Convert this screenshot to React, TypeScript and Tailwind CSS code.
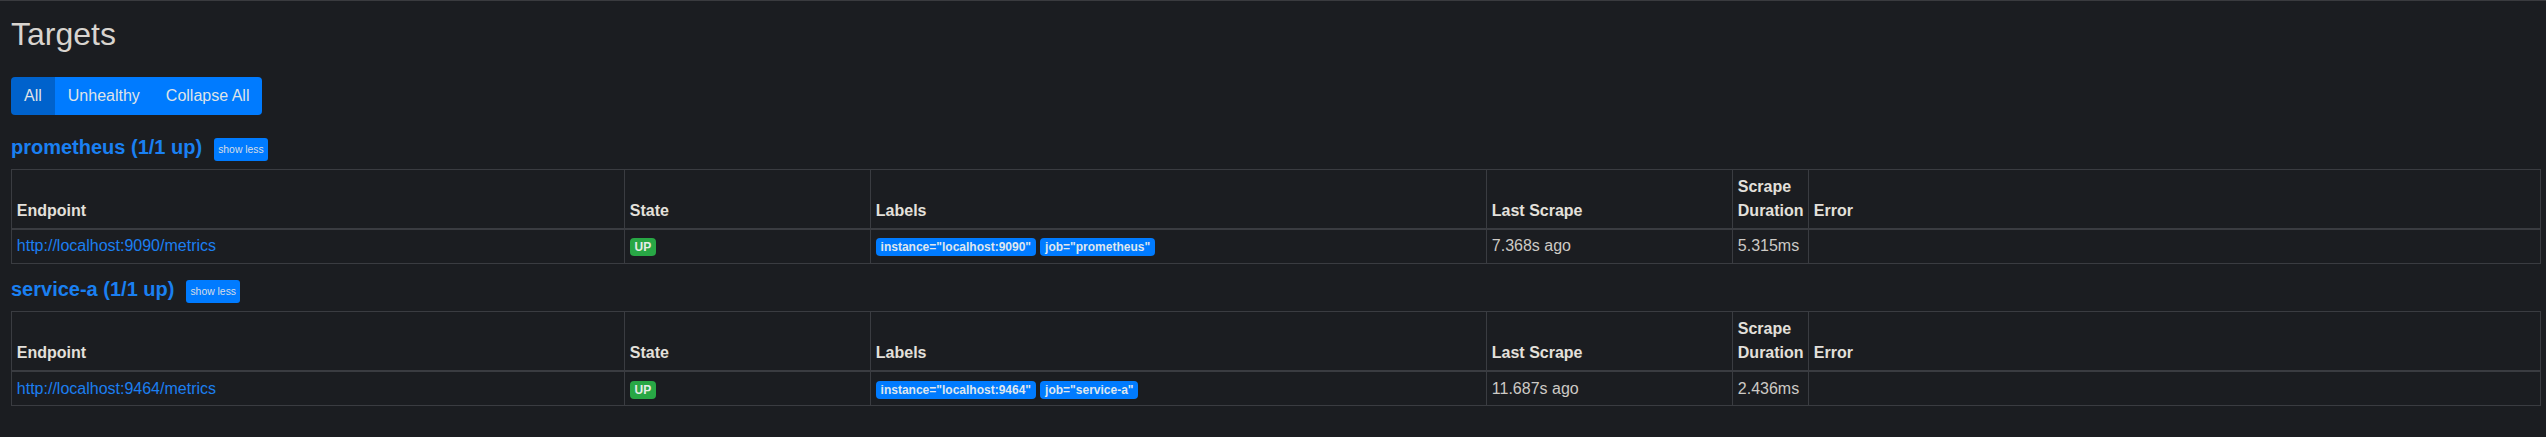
import React from "react";

interface Pool {
  name: string;
  endpoint: string;
  labels: string[];
  lastScrape: string;
  duration: string;
}

const pools: Pool[] = [
  {
    name: "prometheus",
    endpoint: "http://localhost:9090/metrics",
    labels: ['instance="localhost:9090"', 'job="prometheus"'],
    lastScrape: "7.368s ago",
    duration: "5.315ms",
  },
  {
    name: "service-a",
    endpoint: "http://localhost:9464/metrics",
    labels: ['instance="localhost:9464"', 'job="service-a"'],
    lastScrape: "11.687s ago",
    duration: "2.436ms",
  },
];

const th =
  "border border-[#3a3c41] border-b-2 px-[4.8px] py-[4.8px] text-left align-bottom font-bold text-[#e3e0db] leading-6";
const td = "border border-[#3a3c41] px-[4.8px] py-[4.8px] align-top leading-6";

function PoolPanel({ pool, first }: { pool: Pool; first: boolean }) {
  return (
    <div className={first ? "mt-[20px]" : "mt-[13px]"}>
      <div className="flex items-start mb-[8px]">
        <h3 className="text-[20px] leading-6 font-bold text-[#1a80f2]">
          {pool.name} (1/1 up)
        </h3>
        <button className="ml-3 mt-[3px] h-[23px] px-[4px] rounded-[3px] bg-[#007bff] text-[10.4px] text-[#d6dde6]">
          show less
        </button>
      </div>
      <table className="w-full table-fixed border-collapse text-[16px]">
        <colgroup>
          <col className="w-[613px]" />
          <col className="w-[246px]" />
          <col className="w-[616px]" />
          <col className="w-[246px]" />
          <col className="w-[76px]" />
          <col />
        </colgroup>
        <thead>
          <tr>
            <th className={th}>Endpoint</th>
            <th className={th}>State</th>
            <th className={th}>Labels</th>
            <th className={th}>Last Scrape</th>
            <th className={th}>Scrape Duration</th>
            <th className={th}>Error</th>
          </tr>
        </thead>
        <tbody>
          <tr>
            <td className={td}>
              <a href="#" className="text-[#1c7ff0]">
                {pool.endpoint}
              </a>
            </td>
            <td className={td}>
              <span className="inline-block rounded-[4px] bg-[#28a745] px-[4.8px] py-[3px] text-[12px] font-bold leading-none text-[#e6ece8]">
                UP
              </span>
            </td>
            <td className={td}>
              {pool.labels.map((l, i) => (
                <React.Fragment key={l}>
                  {i > 0 && " "}
                  <span className="inline-block rounded-[4px] bg-[#007bff] px-[4.8px] py-[3px] text-[12px] font-bold leading-none text-[#dfe6ee]">
                    {l}
                  </span>
                </React.Fragment>
              ))}
            </td>
            <td className={td}>{pool.lastScrape}</td>
            <td className={td}>{pool.duration}</td>
            <td className={td}></td>
          </tr>
        </tbody>
      </table>
    </div>
  );
}

export default function App() {
  return (
    <div className="min-h-screen bg-[#1b1d21] border-t border-[#3a3b3f] pl-[11px] pr-[5px] font-['Liberation_Sans',Arial,sans-serif] text-[#cdcac5]">
      <h2 className="mt-[14px] text-[32px] leading-[1.2] text-[#d8d4cf]">
        Targets
      </h2>
      <div className="mt-[23.6px] inline-flex h-[38px] text-[16px] text-[#dfe3e8]">
        <button className="rounded-l-[4px] bg-[#0062cc] px-[13px] leading-6">
          All
        </button>
        <button className="bg-[#007bff] px-[13px] leading-6">Unhealthy</button>
        <button className="rounded-r-[4px] bg-[#007bff] px-[13px] leading-6">
          Collapse All
        </button>
      </div>
      {pools.map((p, i) => (
        <PoolPanel key={p.name} pool={p} first={i === 0} />
      ))}
    </div>
  );
}
